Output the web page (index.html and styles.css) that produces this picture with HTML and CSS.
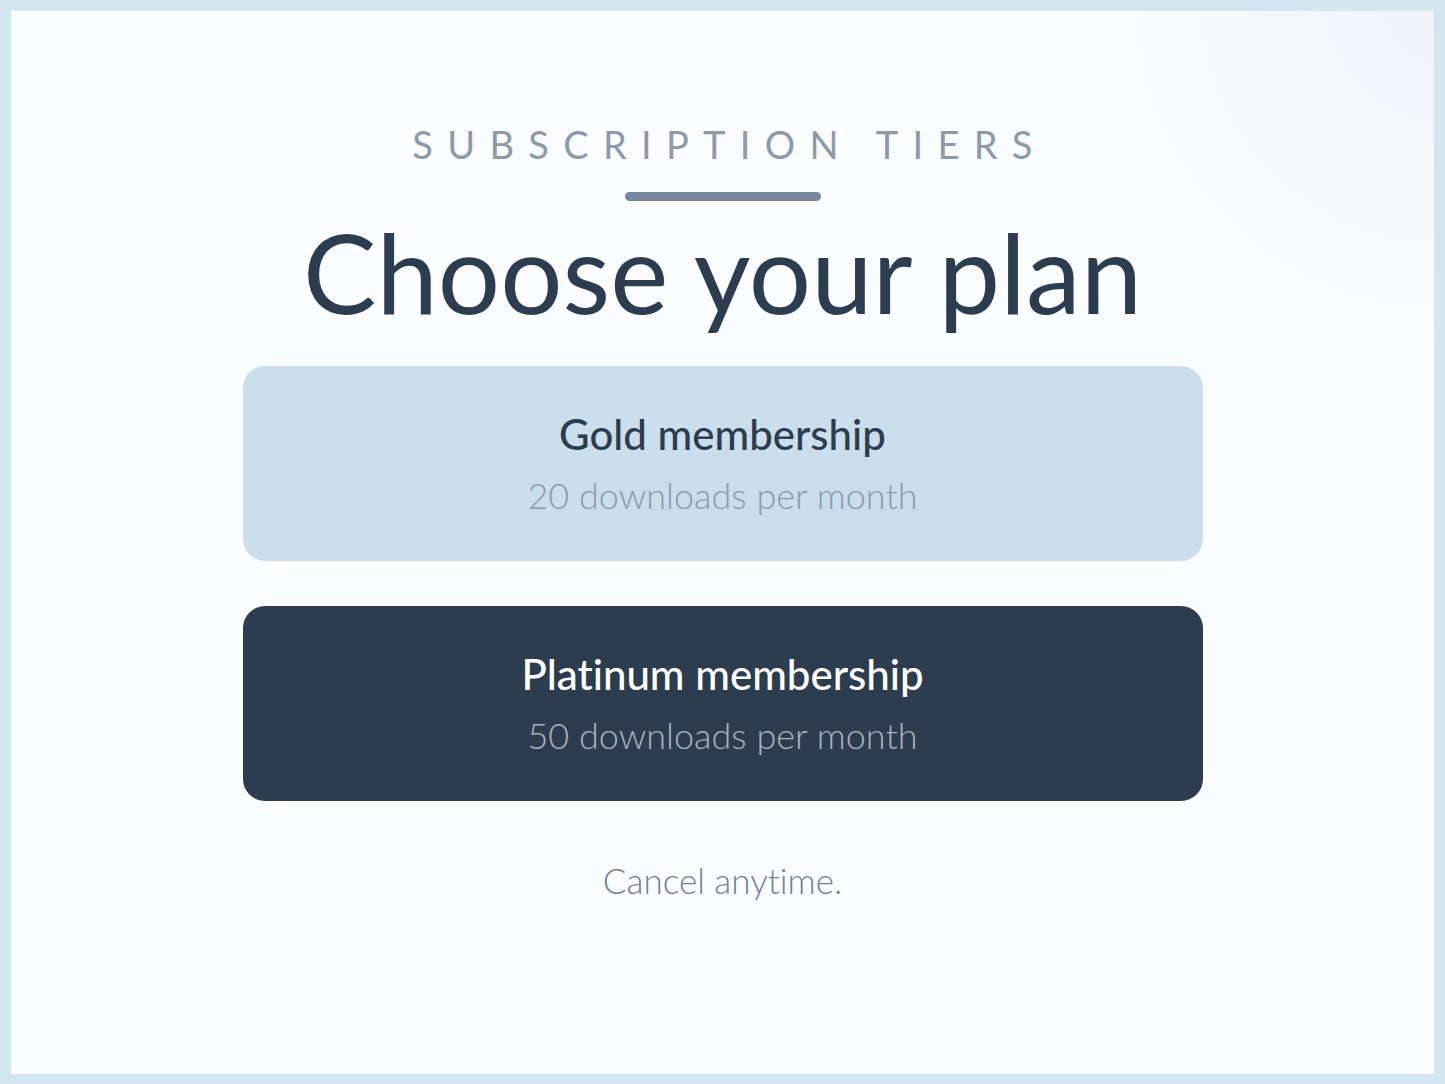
FILE: index.html
```html
<!DOCTYPE html>
<html lang="en">
<head>
    <meta charset="UTF-8">
    <meta name="viewport" content="width=device-width, initial-scale=1.0">
    <title>Choose your plan</title>
    <link rel="stylesheet" href="styles.css">
</head>
<body>
    <main class="page">
        <p class="eyebrow">Subscription tiers</p>
        <div class="rule"></div>
        <h1 class="title">Choose your plan</h1>

        <div class="plans">
            <div class="plan plan-gold">
                <h2 class="plan-name">Gold membership</h2>
                <p class="plan-desc">20 downloads per month</p>
            </div>
            <div class="plan plan-platinum">
                <h2 class="plan-name">Platinum membership</h2>
                <p class="plan-desc">50 downloads per month</p>
            </div>
        </div>

        <p class="note">Cancel anytime.</p>
    </main>
</body>
</html>
```

FILE: styles.css
```css
html, body {
    margin: 0;
    height: 100%;
}
body {
    box-sizing: border-box;
    border: 11px solid #d1e6ee;
    border-bottom-width: 10px;
    background: radial-gradient(circle at top right, #eff3f8 0, #f6f8fb 200px, #fbfcfe 360px);
    font-family: "Lato", "Noto Sans", sans-serif;
    font-variant-ligatures: none;
    color: #2d3d50;
}
.page {
    display: flex;
    flex-direction: column;
    align-items: center;
    padding-top: 107px;
}
.eyebrow {
    margin: 0;
    font-size: 38px;
    line-height: 52px;
    letter-spacing: 14.3px;
    text-transform: uppercase;
    color: #8c9aab;
    padding-left: 14px;
}
.rule {
    width: 196px;
    height: 9px;
    border-radius: 5px;
    background-color: #76889b;
    margin-top: 22px;
}
.title {
    margin: 0;
    font-size: 110px;
    font-weight: 400;
    line-height: 140px;
}
.plans {
    display: flex;
    flex-direction: column;
    gap: 45px;
    margin-top: 25px;
}
.plan {
    width: 960px;
    height: 195px;
    border-radius: 22px;
    display: flex;
    flex-direction: column;
    align-items: center;
    justify-content: center;
    box-sizing: border-box;
    padding-bottom: 2px;
}
.plan-gold {
    background-color: #cbdeec;
}
.plan-platinum {
    background-color: #2d3d50;
}
.plan-name {
    margin: 0;
    font-size: 42px;
    font-weight: 500;
    line-height: 56px;
}
.plan-desc {
    margin: 8px 0 0;
    font-size: 36px;
    font-weight: 300;
    line-height: 50px;
    color: #8a9bab;
}
.plan-platinum .plan-name {
    color: #ffffff;
}
.plan-platinum .plan-desc {
    color: #a9b3be;
}
.note {
    margin: 56px 0 0;
    font-size: 35px;
    font-weight: 300;
    line-height: 46px;
    color: #6f8296;
}
```
